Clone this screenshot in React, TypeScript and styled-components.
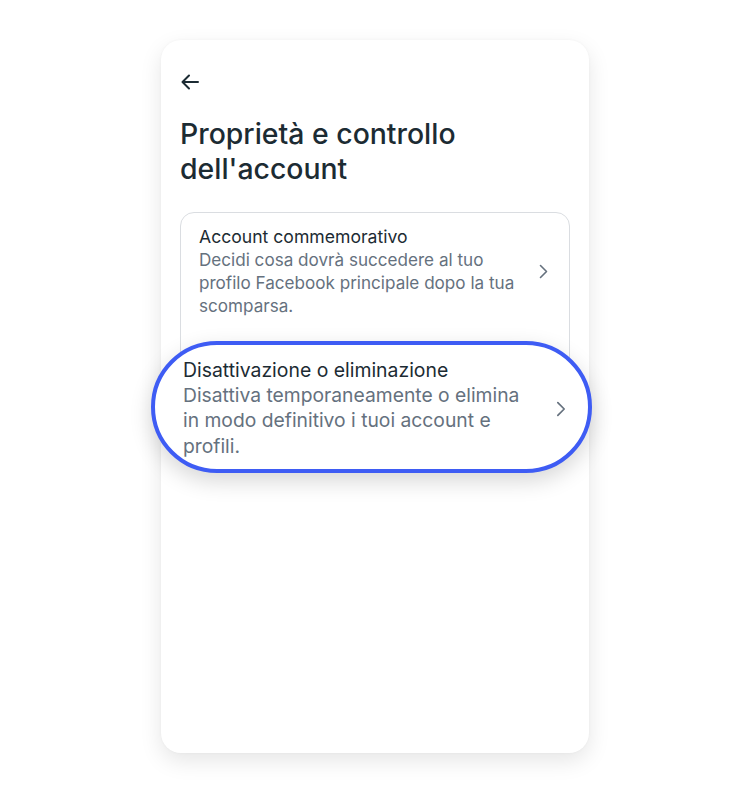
import React from "react";
import styled, { createGlobalStyle } from "styled-components";

const GlobalStyle = createGlobalStyle`
  html, body {
    margin: 0;
    padding: 0;
    background: #ffffff;
  }
  body {
    font-family: Inter, "Noto Sans", "Liberation Sans", sans-serif;
    -webkit-font-smoothing: antialiased;
  }
`;

const Page = styled.div`
  width: 750px;
  height: 794px;
  padding-top: 40px;
  box-sizing: border-box;
  display: flex;
  justify-content: center;
`;

const Phone = styled.div`
  width: 428px;
  height: 713px;
  background: #fff;
  border-radius: 20px;
  box-shadow: 0 8px 22px rgba(0, 0, 0, 0.1), 0 0 3px rgba(0, 0, 0, 0.04);
  padding: 30px 19px 0 19px;
  box-sizing: border-box;
`;

const BackButton = styled.button`
  width: 24px;
  height: 24px;
  padding: 0;
  border: none;
  background: none;
  display: flex;
  align-items: center;
  cursor: pointer;
`;

const Title = styled.h1`
  margin: 22px 0 26px 0;
  font-size: 28.4px;
  line-height: 35px;
  font-weight: 500;
  color: #1c2b33;
`;

const ListCard = styled.div`
  border: 1px solid #dadde1;
  border-radius: 14px;
`;

const Item = styled.div`
  display: flex;
  align-items: center;
  padding: 12px 20px 24px 18px;
`;

const Highlight = styled.div`
  position: relative;
  z-index: 1;
  display: flex;
  align-items: center;
  height: 132px;
  box-sizing: border-box;
  margin: 0 -23px -30px -30px;
  padding: 3px 21px 0 28px;
  background: #fff;
  border: 4px solid #3e5cf4;
  border-radius: 66px;
  box-shadow: 0 8px 22px rgba(0, 0, 0, 0.16);
`;

const Texts = styled.div`
  flex: 1;
  display: flex;
  flex-direction: column;
`;

const ItemTitle = styled.div<{ $big?: boolean }>`
  font-size: ${({ $big }) => ($big ? "19.4px" : "17.6px")};
  line-height: ${({ $big }) => ($big ? "25px" : "23px")};
  color: #1c2b33;
  font-weight: 400;
`;

const ItemDesc = styled.div<{ $big?: boolean; $width: number }>`
  font-size: ${({ $big }) => ($big ? "19.3px" : "17.1px")};
  line-height: ${({ $big }) => ($big ? "25.5px" : "23px")};
  color: #65717e;
  max-width: ${({ $width }) => $width}px;
`;

const Chevron = styled.svg<{ $big?: boolean }>`
  flex: none;
  width: ${({ $big }) => ($big ? "12px" : "11px")};
  height: ${({ $big }) => ($big ? "18px" : "17px")};
  margin-left: 12px;
`;

const ArrowLeft = () => (
  <svg width="20" height="20" viewBox="0 0 20 20" fill="none">
    <path
      d="M18 10H3M9 3.5L2.5 10L9 16.5"
      stroke="#1c2b33"
      strokeWidth="2"
      strokeLinecap="round"
      strokeLinejoin="round"
    />
  </svg>
);

const ChevronIcon = ({ big }: { big?: boolean }) => (
  <Chevron $big={big} viewBox="0 0 11 17" fill="none">
    <path
      d="M2.5 2.5L8.5 8.5L2.5 14.5"
      stroke="#65717e"
      strokeWidth="1.6"
      strokeLinecap="round"
      strokeLinejoin="round"
    />
  </Chevron>
);

export default function App() {
  return (
    <>
      <GlobalStyle />
      <Page>
        <Phone>
          <BackButton aria-label="Indietro">
            <ArrowLeft />
          </BackButton>
          <Title>
            Proprietà e controllo
            <br />
            dell'account
          </Title>
          <ListCard>
            <Item>
              <Texts>
                <ItemTitle>Account commemorativo</ItemTitle>
                <ItemDesc $width={320}>
                  Decidi cosa dovrà succedere al tuo profilo Facebook principale
                  dopo la tua scomparsa.
                </ItemDesc>
              </Texts>
              <ChevronIcon />
            </Item>
            <Highlight>
              <Texts>
                <ItemTitle $big>Disattivazione o eliminazione</ItemTitle>
                <ItemDesc $big $width={345}>
                  Disattiva temporaneamente o elimina in modo definitivo i tuoi
                  account e profili.
                </ItemDesc>
              </Texts>
              <ChevronIcon big />
            </Highlight>
          </ListCard>
        </Phone>
      </Page>
    </>
  );
}
